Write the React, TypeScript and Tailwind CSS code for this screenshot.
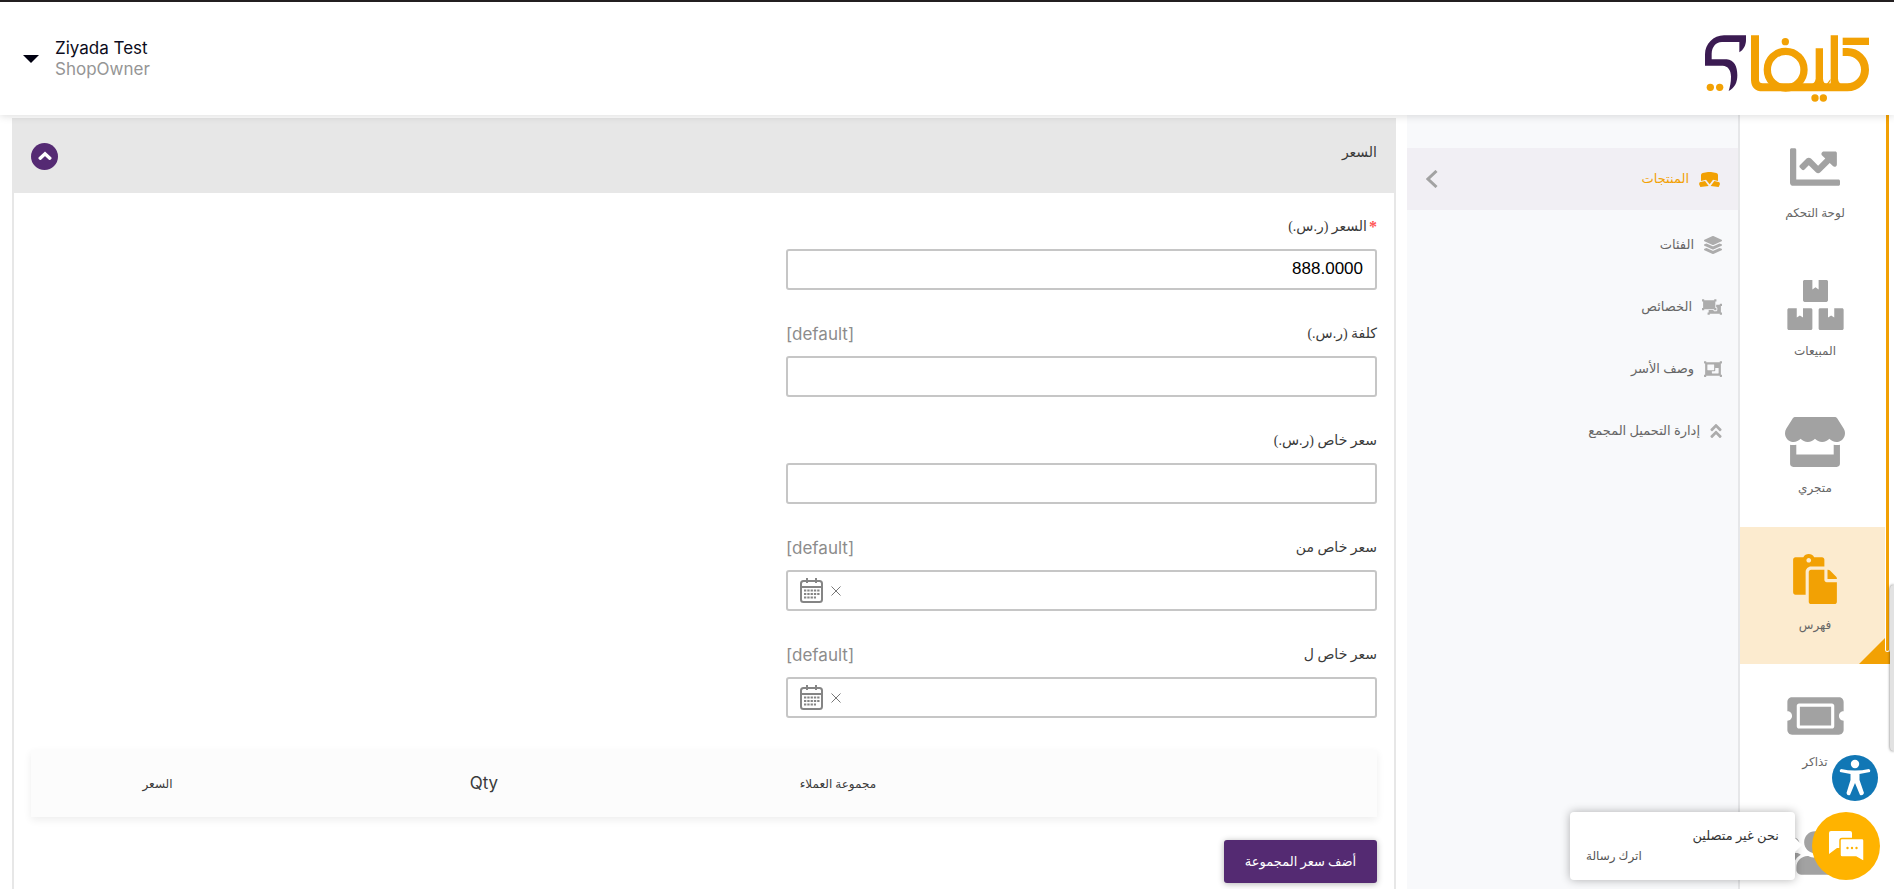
import type { ReactNode } from "react";
import {
  FaAngleDoubleUp,
  FaBoxes,
  FaChartLine,
  FaLayerGroup,
  FaObjectGroup,
  FaObjectUngroup,
  FaPaste,
  FaStore,
  FaTicketAlt,
  FaUsers,
} from "react-icons/fa";

const latin = "font-['Inter','DejaVu_Sans',sans-serif]";

function Logo() {
  return (
    <svg viewBox="135 107 492 201" className="h-[67px] w-[164px]" role="img" aria-label="Logo">
      <path
        fill="#3b1b52"
        d="M258 108H192C160 108 135 134 135 165V199H188C204 200 213 212 213 232C213 250 210 262 206 275C224 266 232 250 232 228C232 200 222 182 200 180H155V163C156 143 166 129 186 128H238V159C250 152 258 138 258 122Z"
      />
      <g fill="none" stroke="#f2a104" strokeWidth="22">
        <path strokeWidth="24" d="M285 108V242Q286 264 308 264H562A53 53 0 0 0 562 158H548" />
        <circle cx="377" cy="211" r="55" />
        <path d="M478 147V264M523 108V264" />
        <path d="M548 126H627" />
      </g>
      <g fill="#f2a104">
        <path d="M467 238Q466 252 450 256H470ZM512 238Q511 252 500 256H489V238Q490 252 500 254ZM534 238Q535 252 548 256H530Z" />
        <circle cx="376" cy="127" r="11" />
        <circle cx="465" cy="296" r="11" />
        <circle cx="490" cy="296" r="11" />
        <circle cx="151" cy="264" r="11" />
        <circle cx="179" cy="264" r="11" />
      </g>
    </svg>
  );
}

function ProductIcon() {
  return (
    <svg viewBox="0 0 63 45" className="h-[15px] w-[21px]" fill="currentColor" aria-hidden="true">
      <path d="M6 9Q6 4 11 3L27 0H36L52 3Q57 4 57 9V27L42 23L32 37L21 23L6 27Z" />
      <path d="M2 31L18 27L29 42L4 45L0 36ZM61 31L46 27L35 42L59 45L63 36Z" />
    </svg>
  );
}

function CalendarIcon() {
  return (
    <svg viewBox="0 0 23 25" className="h-[25px] w-[23px]" fill="none" stroke="#858585" aria-hidden="true">
      <rect x="1" y="3" width="21" height="21" rx="2.5" strokeWidth="2" />
      <path d="M1 9H22" strokeWidth="2" />
      <path d="M7 0V5M16 0V5" strokeWidth="2" />
      <path d="M4 12.500H20M4 16H20M4 19.500H16" strokeWidth="2.2" strokeDasharray="2.300 1" />
    </svg>
  );
}

const mainNav: { label: string; icon: ReactNode; active?: boolean; iconOnly?: boolean }[] = [
  { label: "لوحة التحكم", icon: <FaChartLine size={50} /> },
  { label: "المبيعات", icon: <FaBoxes className="h-[50px] w-[57px]" /> },
  { label: "متجري", icon: <FaStore className="h-[50px] w-[60px]" /> },
  { label: "فهرس", icon: <FaPaste className="h-[50px] w-[50px]" />, active: true },
  { label: "تذاكر", icon: <FaTicketAlt className="h-[50px] w-[57px]" /> },
  { label: "العملاء", icon: <FaUsers className="h-[50px] w-[62px]" />, iconOnly: true },
];

const subNav: { label: string; icon: ReactNode }[] = [
  { label: "الفئات", icon: <FaLayerGroup size={18} /> },
  { label: "الخصائص", icon: <FaObjectUngroup size={20} /> },
  { label: "وصف الأسر", icon: <FaObjectGroup size={18} /> },
  { label: "إدارة التحميل المجمع", icon: <FaAngleDoubleUp className="h-[18px] w-[12px]" /> },
];

type FieldDef = { id: string; label: string; value?: string; required?: boolean; scoped?: boolean; date?: boolean };

const fields: FieldDef[] = [
  { id: "price", label: "السعر (ر.س.)", value: "888.0000", required: true },
  { id: "cost", label: "كلفة (ر.س.)", scoped: true },
  { id: "special", label: "سعر خاص (ر.س.)" },
  { id: "special-from", label: "سعر خاص من", scoped: true, date: true },
  { id: "special-to", label: "سعر خاص ل", scoped: true, date: true },
];

function Field({ id, label, value, required, scoped, date }: FieldDef) {
  return (
    <div>
      <div className="mb-[10px] flex h-6 items-center justify-between">
        <label htmlFor={id} className="flex items-center gap-[2px] text-[14px] leading-6 text-[#3a3a3a]">
          {required && <span className="text-[16px] font-bold text-[#ff5656]">*</span>}
          {label}
        </label>
        {scoped && (
          <span dir="ltr" className={`${latin} text-[17px] leading-6 text-[#8c8c8c]`}>
            [default]
          </span>
        )}
      </div>
      <div className="flex h-[41px] items-center rounded-[3px] border-2 border-[#c6c6c6] bg-white">
        <input
          id={id}
          type="text"
          defaultValue={value}
          className="h-full min-w-0 flex-1 bg-transparent px-3 pb-[2px] font-['Liberation_Sans',sans-serif] text-[17px] text-black outline-none"
        />
        {date && (
          <div className="flex items-center gap-2 pl-3">
            <button type="button" aria-label="مسح التاريخ" className="text-[#777]">
              <svg viewBox="0 0 10 10" className="size-[10px]" stroke="currentColor" aria-hidden="true">
                <path d="M0.5 0.5L9.5 9.5M9.5 0.5L0.5 9.5" />
              </svg>
            </button>
            <button type="button" aria-label="اختر التاريخ">
              <CalendarIcon />
            </button>
          </div>
        )}
      </div>
    </div>
  );
}

export default function App() {
  return (
    <div
      dir="rtl"
      className="relative flex h-screen flex-col overflow-hidden border-t-2 border-[#231f20] bg-white font-['Liberation_Serif','DejaVu_Sans',serif] text-[#333]"
    >
      <header className="relative z-10 flex h-[113px] shrink-0 items-start justify-between bg-white pr-[25px] pl-[23px] shadow-[0_1px_8px_rgba(0,0,0,0.14)]">
        <a href="#" className="mt-[33px]">
          <Logo />
        </a>
        <button type="button" dir="ltr" className="mt-9 flex items-center gap-4 text-left">
          <span className="h-0 w-0 border-x-8 border-t-8 border-x-transparent border-t-[#000010]" />
          <span className={`${latin} flex flex-col text-[17px] leading-[21px]`}>
            <span className="text-[#0c0c20]">Ziyada Test</span>
            <span className="text-[#959595]">ShopOwner</span>
          </span>
        </button>
      </header>

      <div className="flex min-h-0 flex-1 pr-1">
        <nav className="relative w-[152px] shrink-0 border-l-2 border-[#e6e7e9]">
          <ul>
            {mainNav.map((item) => (
              <li key={item.label} className="group">
                <a
                  href="#"
                  aria-label={item.label}
                  className={`flex h-[137px] flex-col items-center gap-[9px] pt-[27px] text-[12px] leading-6 text-[#666] group-first:h-[138px] ${
                    item.active ? "bg-[#fcebcf]" : ""
                  }`}
                >
                  <span className={item.active ? "text-[#f2a104]" : "text-[#a2a2a2]"}>{item.icon}</span>
                  {!item.iconOnly && item.label}
                </a>
              </li>
            ))}
          </ul>
          <span className="absolute top-[518px] right-0 border-b-[31px] border-l-[31px] border-b-[#f2a104] border-l-transparent" />
          <span className="absolute top-0 right-0 h-[537px] w-[5px] rounded-b border-x border-b border-white bg-[#f2a104]" />
        </nav>

        <aside className="w-[331px] shrink-0 bg-[#f8f9fb] pt-[33px]">
          <a
            href="#"
            className="mb-1 flex h-[62px] items-center justify-between bg-[#f1eff4] pr-[18px] pl-[19px] text-[13px] text-[#f2a104]"
          >
            <span className="flex items-center gap-[10px]">
              <ProductIcon />
              المنتجات
            </span>
            <svg viewBox="0 0 12 18" className="h-[18px] w-[12px]" fill="none" stroke="#a2a2a2" strokeWidth="3" aria-hidden="true">
              <path d="M10.5 1L2 9L10.5 17" />
            </svg>
          </a>
          <ul>
            {subNav.map((item) => (
              <li key={item.label}>
                <a href="#" className="flex h-[62px] items-center gap-[10px] pr-4 text-[13px] text-[#666]">
                  <span className="text-[#acacac]">{item.icon}</span>
                  {item.label}
                </a>
              </li>
            ))}
          </ul>
        </aside>

        <main className="min-w-0 flex-1 pt-[3px] pr-[11px] pl-3">
          <section className="h-full border-x-2 border-[#e7e7e7]">
            <div className="flex h-[75px] items-center justify-between bg-[#e7e7e7] px-[17px] pt-[2px]">
              <h2 className="mb-2 text-[14px] text-[#3a3a3a]">السعر</h2>
              <button type="button" aria-label="طي القسم" className="flex size-[27px] items-center justify-center rounded-full bg-[#552a73]">
                <svg viewBox="0 0 14 10" className="mb-[2px] h-[10px] w-[14px]" fill="none" stroke="white" strokeWidth="3.4" strokeLinecap="round" aria-hidden="true">
                  <path d="M2.2 7.2L7 2.8L11.8 7.2" />
                </svg>
              </button>
            </div>

            <div className="px-[17px] pt-[22px]">
              <form className="flex w-[591px] max-w-full flex-col gap-8">
                {fields.map((f) => (
                  <Field key={f.id} {...f} />
                ))}
              </form>

              <table className="mt-8 w-full table-fixed bg-[#fcfcfc] shadow-[0_3px_8px_rgba(0,0,0,0.07)]">
                <thead>
                  <tr className="h-[67px] text-[12px] text-[#3a3a3a]">
                    <td className="w-[28.6%]" />
                    <th className="w-[22.9%] font-normal">مجموعة العملاء</th>
                    <th className={`${latin} w-[29.7%] text-[17px] font-normal`}>Qty</th>
                    <th className="font-normal">السعر</th>
                  </tr>
                </thead>
              </table>

              <button
                type="button"
                className="mt-[23px] flex h-[43px] w-[153px] items-center justify-center rounded-[3px] bg-[#542a72] text-[13px] text-white shadow-[0_1px_6px_rgba(0,0,0,0.3)]"
              >
                أضف سعر المجموعة
              </button>
            </div>
          </section>
        </main>
      </div>

      <span className="absolute top-[583px] right-0 z-10 h-[166px] w-1 rounded-l bg-[#e2e2e2] shadow-[0_0_3px_rgba(0,0,0,0.6)]" />

      <button
        type="button"
        aria-label="إمكانية الوصول"
        className="absolute right-4 bottom-[88px] z-20 size-[46px] rounded-full bg-[#1177b5]"
      >
        <svg viewBox="0 0 46 46" className="size-full" fill="white" aria-hidden="true">
          <circle cx="23" cy="9" r="4.2" />
          <path d="M9 14Q23 17 37 14Q39 15 38 17L27.5 19V25L32 38Q31 41 28 40L23 28L18 40Q15 41 14.500 38L18.500 25V19L8 17Q7 15 9 14Z" />
        </svg>
      </button>

      <div className="absolute right-[14px] bottom-[9px] z-20 flex items-center gap-[17px]">
        <button
          type="button"
          aria-label="الدردشة"
          className="flex size-[68px] items-center justify-center rounded-full bg-[#ffb300]"
        >
          <svg viewBox="0 0 35 31" className="h-[31px] w-[35px]" aria-hidden="true">
            <path fill="white" d="M2 0H21Q23 0 23 2V17H8L0 23V2Q0 0 2 0Z" />
            <path
              fill="white"
              stroke="#ffb300"
              strokeWidth="1.5"
              d="M13 7.500H33Q35 7.500 35 9.500V30.500L27 26H13Q11 26 11 24V9.500Q11 7.500 13 7.500Z"
            />
            <g fill="#ffb300">
              <circle cx="18.500" cy="17" r="1.200" />
              <circle cx="23" cy="17" r="1.200" />
              <circle cx="27.500" cy="17" r="1.200" />
            </g>
          </svg>
        </button>
        <div className="relative flex h-[68px] w-[225px] flex-col justify-center rounded bg-white px-4 shadow-[0_0_10px_rgba(0,0,0,0.3)]">
          <span className="absolute top-[28px] -right-[5px] size-[10px] rotate-45 bg-white" />
          <p className="text-[13px] leading-5 text-[#333]">نحن غير متصلين</p>
          <p className="self-end text-[12px] leading-5 text-[#555]">اترك رسالة</p>
        </div>
      </div>
    </div>
  );
}
